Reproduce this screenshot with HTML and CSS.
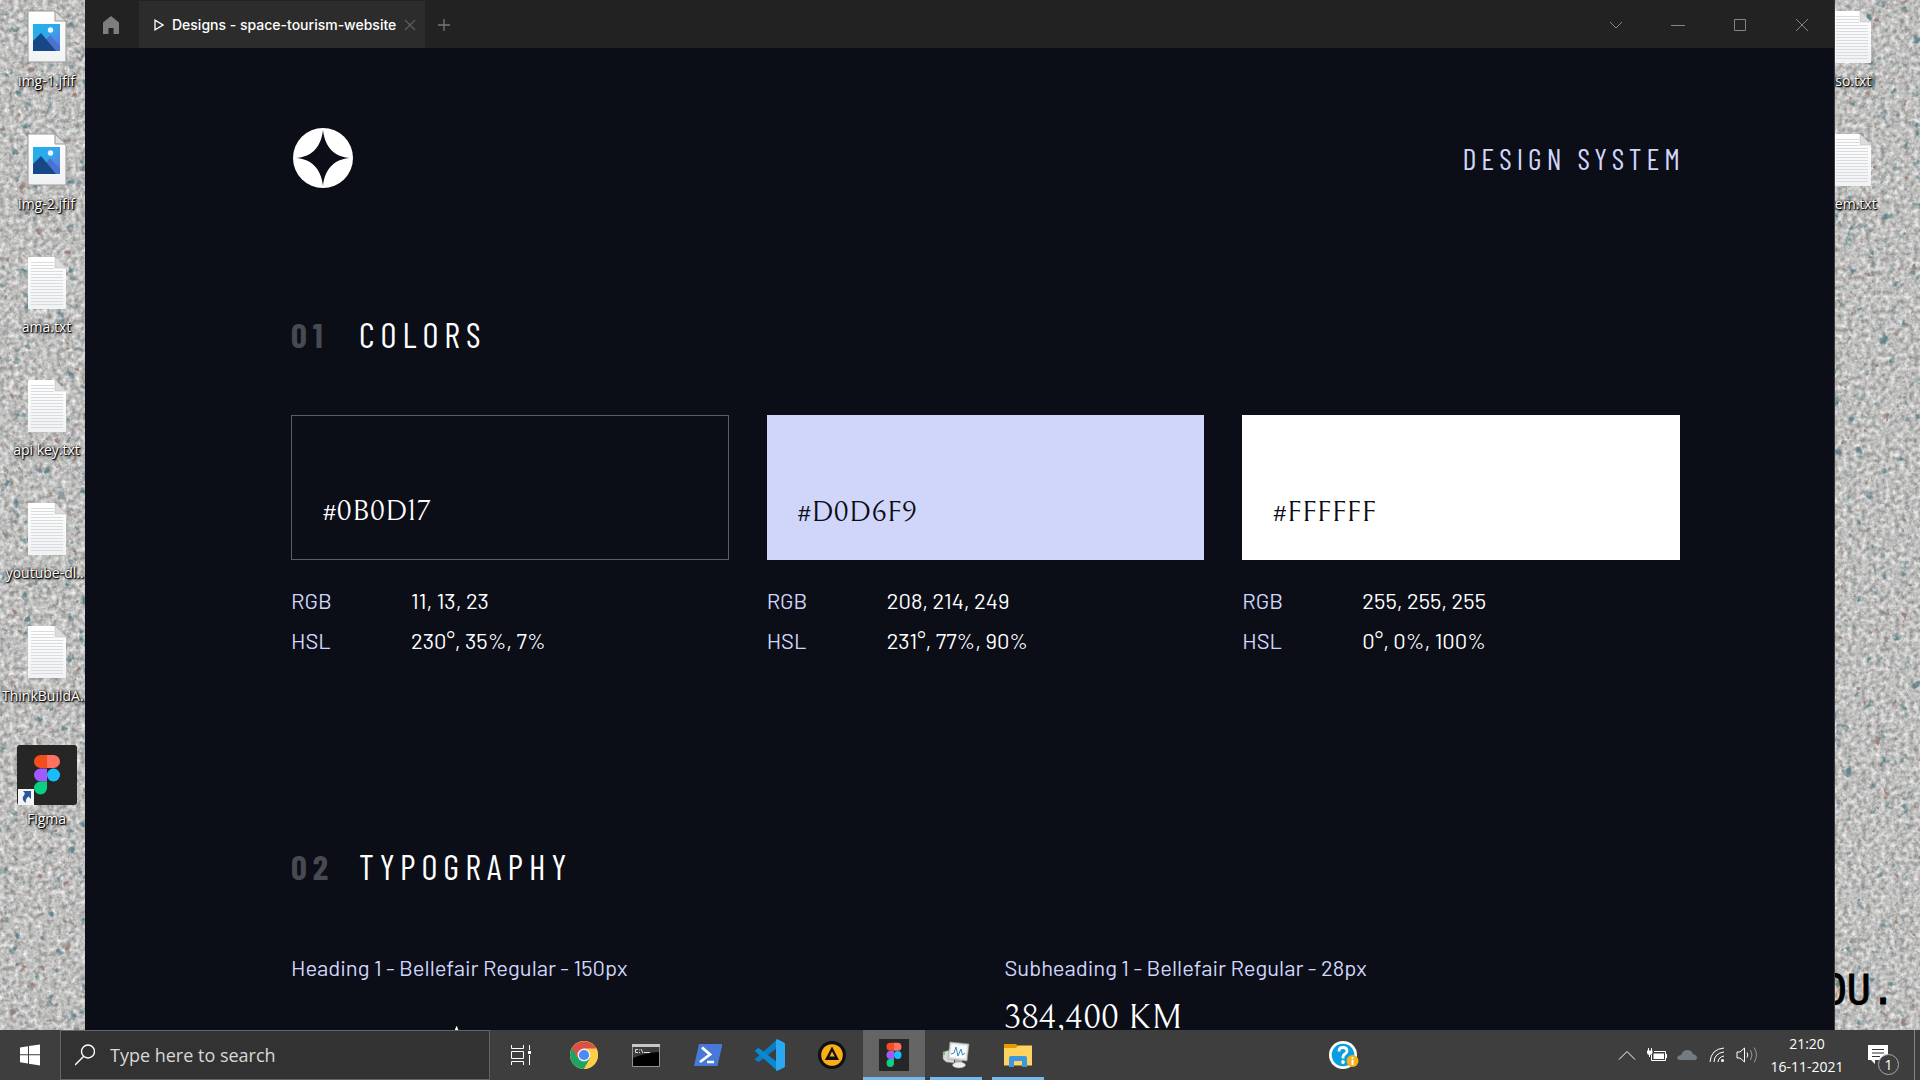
FILE: index.html
```html
<!DOCTYPE html>
<html lang="en">
<head>
<meta charset="utf-8">
<title>Designs - space-tourism-website</title>
<link rel="stylesheet" href="styles.css">
</head>
<body>
<svg class="defs" aria-hidden="true">
  <defs>
    <filter id="grain" x="0" y="0" width="100%" height="100%" color-interpolation-filters="sRGB">
      <feTurbulence type="fractalNoise" baseFrequency="0.21" numOctaves="5" seed="4"/>
      <feColorMatrix values="0.56 0 0 0 0.47  0.54 0.02 0 0 0.47  0.54 0 0.02 0 0.465  0 0 0 0 1"/>
    </filter>
    <filter id="teal" x="0" y="0" width="100%" height="100%" color-interpolation-filters="sRGB">
      <feTurbulence type="fractalNoise" baseFrequency="0.09" numOctaves="3" seed="9"/>
      <feColorMatrix values="0 0 0 0 0.38  0 0 0 0 0.52  0 0 0 0 0.55  6 0 0 0 -3.950"/>
    </filter>
    <filter id="rust" x="0" y="0" width="100%" height="100%" color-interpolation-filters="sRGB">
      <feTurbulence type="fractalNoise" baseFrequency="0.11" numOctaves="3" seed="31"/>
      <feColorMatrix values="0 0 0 0 0.6  0 0 0 0 0.5  0 0 0 0 0.47  7 0 0 0 -4.800"/>
    </filter>
    <linearGradient id="sky" x1="0" y1="0" x2="1" y2="1"><stop offset="0" stop-color="#1fb1ea"/><stop offset=".5" stop-color="#35a5ea"/><stop offset="1" stop-color="#6f6ad8"/></linearGradient>
    <linearGradient id="paper" x1="0" y1="0" x2="0" y2="1"><stop offset="0" stop-color="#fff"/><stop offset="1" stop-color="#f1f2f4"/></linearGradient>
    <pattern id="rules" width="32" height="3" patternUnits="userSpaceOnUse"><path d="M0 .5H32" stroke="#d9dcdf"/></pattern>
    <symbol id="image-file" viewBox="0 0 40 54">
      <path d="M1 1H28L39 12V52H1Z" fill="url(#paper)" stroke="#999"/>
      <path d="M28 1V11H39Z" fill="#ddd" stroke="#999"/>
      <path d="M6 14H33V41H6Z" fill="url(#sky)"/>
      <path d="M18 31L23 25L33 36V41H18Z" fill="#4a73d0"/>
      <path d="M6 31L14 23L29 41H6Z" fill="#174787"/>
      <circle cx="23.500" cy="20" r="2.700" fill="#e8f7ff"/>
    </symbol>
    <symbol id="text-file" viewBox="0 0 40 54">
      <path d="M1 1H28L39 12V53H1Z" fill="url(#paper)"/>
      <path d="M4 5H27V13H36V49H4Z" fill="url(#rules)"/>
      <path d="M28 1V12H39Z" fill="#dcdcdc" stroke="#bbb" stroke-width=".5"/>
    </symbol>
    <symbol id="figma-logo" viewBox="0 0 60 60">
      <rect width="60" height="60" rx="3" fill="#262626"/>
      <path d="M30 10H23.500a6.500 6.500 0 0 0 0 13H30Z" fill="#f24e1e"/>
      <path d="M30 10h6.500a6.500 6.500 0 0 1 0 13H30Z" fill="#ff7262"/>
      <path d="M30 23.500h-6.500a6.500 6.500 0 0 0 0 13H30Z" fill="#a259ff"/>
      <circle cx="36.500" cy="30" r="6.500" fill="#1abcfe"/>
      <path d="M30 36.500h-6.500a6.500 6.500 0 1 0 6.500 6.500Z" fill="#0acf83"/>
    </symbol>
  </defs>
</svg>

<div class="desktop">
  <svg class="wallpaper" aria-hidden="true">
    <rect width="100%" height="100%" filter="url(#grain)"/>
    <rect width="100%" height="100%" filter="url(#teal)"/>
    <rect width="100%" height="100%" filter="url(#rust)"/>
  </svg>

  <div class="icons icons-left">
    <button class="shortcut"><svg class="file"><use href="#image-file"/></svg><span>img-1.jfif</span></button>
    <button class="shortcut"><svg class="file"><use href="#image-file"/></svg><span>img-2.jfif</span></button>
    <button class="shortcut"><svg class="file"><use href="#text-file"/></svg><span>ama.txt</span></button>
    <button class="shortcut"><svg class="file"><use href="#text-file"/></svg><span>api key.txt</span></button>
    <button class="shortcut"><svg class="file"><use href="#text-file"/></svg><span>youtube-dl...</span></button>
    <button class="shortcut"><svg class="file"><use href="#text-file"/></svg><span>ThinkBuildA...</span></button>
    <button class="shortcut app"><svg class="tile" viewBox="0 0 60 60"><use href="#figma-logo"/><path d="M1 44H17V60H1Z" fill="#f4f4f4"/><path d="M6 46H14V54L11.500 51.500Q8 54 9 58Q3 55 8 48.500Z" fill="#2b579a"/></svg><span>Figma</span></button>
  </div>

  <div class="window">
    <header class="titlebar">
      <button class="home" aria-label="Home"><svg width="16" height="18" viewBox="0 0 16 18"><path d="M0 18V6.500L8 0L16 6.500V18H10.500V12H5.500V18Z" fill="#7d7d7d"/></svg></button>
      <div class="tab">
        <svg width="10" height="12" viewBox="0 0 10 12"><path d="M1 1.200V10.800L9 6Z" fill="none" stroke="#fff" stroke-width="1.300"/></svg>
        <span>Designs - space-tourism-website</span>
        <button aria-label="Close tab"><svg width="12" height="12" viewBox="0 0 12 12"><path d="M1 1L11 11M11 1L1 11" stroke="#5c5c5c" stroke-width="1.300"/></svg></button>
      </div>
      <button class="new-tab" aria-label="New tab"><svg width="12" height="12" viewBox="0 0 12 12"><path d="M6 0V12M0 6H12" stroke="#777" stroke-width="1.300"/></svg></button>
      <div class="controls">
        <button aria-label="More"><svg width="14" height="14" viewBox="0 0 14 14"><path d="M1 4L7 10L13 4"/></svg></button>
        <button aria-label="Minimize"><svg width="14" height="14" viewBox="0 0 14 14"><path d="M0 7.500H14"/></svg></button>
        <button aria-label="Maximize"><svg width="14" height="14" viewBox="0 0 14 14"><path d="M1.500 1.500H12.500V12.500H1.500Z"/></svg></button>
        <button aria-label="Close"><svg width="14" height="14" viewBox="0 0 14 14"><path d="M1 1L13 13M13 1L1 13"/></svg></button>
      </div>
    </header>

    <main class="canvas">
      <div class="brand">
        <svg width="60" height="60" viewBox="0 0 60 60"><circle cx="30" cy="30" r="30" fill="#fff"/><path d="M30 2C32 20 42 29 57 30C42 31 32 40 30 58C28 40 18 31 3 30C18 29 28 20 30 2Z" fill="#0b0d17"/></svg>
        <h1>DESIGN SYSTEM</h1>
      </div>

      <section class="colors">
        <h2><span>01</span>COLORS</h2>
        <div class="swatches">
          <article>
            <h3 class="swatch dark">#0B0D17</h3>
            <dl><dt>RGB</dt><dd>11, 13, 23</dd><dt>HSL</dt><dd>230°, 35%, 7%</dd></dl>
          </article>
          <article>
            <h3 class="swatch lilac">#D0D6F9</h3>
            <dl><dt>RGB</dt><dd>208, 214, 249</dd><dt>HSL</dt><dd>231°, 77%, 90%</dd></dl>
          </article>
          <article>
            <h3 class="swatch white">#FFFFFF</h3>
            <dl><dt>RGB</dt><dd>255, 255, 255</dd><dt>HSL</dt><dd>0°, 0%, 100%</dd></dl>
          </article>
        </div>
      </section>

      <section class="typography">
        <h2><span>02</span>TYPOGRAPHY</h2>
        <div class="samples">
          <div><p class="caption">Heading 1 - Bellefair Regular - 150px</p><p class="display">EARTH</p></div>
          <div><p class="caption">Subheading 1 - Bellefair Regular - 28px</p><p class="subheading">384,400 KM</p></div>
        </div>
      </section>
    </main>
  </div>

  <div class="icons icons-right">
    <button class="shortcut"><svg class="file"><use href="#text-file"/></svg><span>iso.txt</span></button>
    <button class="shortcut"><svg class="file"><use href="#text-file"/></svg><span>item.txt</span></button>
    <p class="slogan">YOU.</p>
  </div>
</div>

<footer class="taskbar">
  <button class="start" aria-label="Start"><svg width="20" height="22" viewBox="0 0 20 22"><path d="M0 3.500L8 2.300V10.300H0ZM9 2.100L20 .5V10.300H9ZM0 11.300H8V19.500L0 18.300ZM9 11.300H20V21.500L9 19.700Z" fill="#fff"/></svg></button>
  <label class="search">
    <svg width="20" height="22" viewBox="0 0 20 22"><circle cx="13" cy="7.500" r="6.500" fill="none" stroke="#fff" stroke-width="1.400"/><path d="M8.500 12.500L0 21" stroke="#fff" stroke-width="1.500"/></svg>
    <input type="text" placeholder="Type here to search" aria-label="Search">
  </label>
  <nav class="apps">
    <button aria-label="Task View"><svg width="22" height="20" viewBox="0 0 22 20" fill="none" stroke="#fff"><path d="M.5 0V3.500H12.500V0M.5 20V16.500H12.500V20M.5 6.500H12.500V13.500H.5ZM18.500 0V5M18.500 10V20"/><path d="M17 6H20V9H17Z" fill="#fff" stroke="none"/></svg></button>
    <button aria-label="Chrome"><svg width="28" height="28" viewBox="0 0 28 28"><circle cx="14" cy="14" r="14" fill="#fc4"/><path d="M14 14L1.900 7A14 14 0 0 0 14 28L20 17.500Z" fill="#1da462"/><path d="M14 14L20 17.500L14 28A14 14 0 0 0 26.100 7H14Z" fill="#ffcd46"/><path d="M1.900 7A14 14 0 0 1 26.100 7.500H14L8 17.500Z" fill="#dd5144"/><circle cx="14" cy="14" r="6.500" fill="#f1f1f1"/><circle cx="14" cy="14" r="5.100" fill="#4c8bf5"/></svg></button>
    <button aria-label="Command Prompt"><svg width="28" height="24" viewBox="0 0 28 24"><path d="M.5 1.500H27.500V23.500H.5Z" fill="#000" stroke="#8d949b"/><path d="M0 1H28V4H0Z" fill="#c3c8cc"/><path d="M1 4H27V9Q12 10 1 15Z" fill="#3c3c3c"/><path d="M6 6.500H3.500V9.500H6M7.500 6.500V7.500M7.500 9V10M9 6L11 10M12 9.500H18" stroke="#ddd" fill="none"/></svg></button>
    <button aria-label="PowerShell"><svg width="28" height="24" viewBox="0 0 28 24"><path d="M5 1H28.500L23.500 23H0Z" fill="#4879d8"/><path d="M8 4.500L16 11.500L6 19" fill="none" stroke="#fff" stroke-width="2.800"/><path d="M13 19H20" stroke="#fff" stroke-width="2.500"/></svg></button>
    <button aria-label="Visual Studio Code"><svg width="30" height="32" viewBox="0 0 30 32"><path d="M22 9L4.500 22.500Q3 23.500 1 21.500T1 19L22 .5Z" fill="#0b7dc4"/><path d="M22 23L4.500 9.500Q3 8.500 1 10.500T1 13L22 31.500Z" fill="#0a89d3"/><path d="M21 .5Q22 0 23 .5L29 3.500Q30 4 30 5V27Q30 28 29 28.500L23 31.500Q22 32 21 31.500Z" fill="#2ba8f2"/></svg></button>
    <button aria-label="AIMP"><svg width="28" height="30" viewBox="0 0 28 30"><circle cx="14" cy="15" r="14" fill="#111"/><circle cx="14" cy="15" r="10.800" fill="#fbae17"/><path d="M14 6.500L21 20H14L16.500 17H17L14 11.500L10 20H7Z" fill="#111"/><path d="M7 20L9 16.500H18L20.500 20Z" fill="#111"/></svg></button>
    <button class="open active" aria-label="Figma"><svg width="30" height="32" viewBox="4 4 52 52" preserveAspectRatio="none"><use href="#figma-logo" width="60" height="60"/></svg></button>
    <button class="open" aria-label="System monitor"><svg width="28" height="28" viewBox="0 0 28 28"><path d="M1 11L12 8V22L4 21L1 18Z" fill="#d7d7d7" stroke="#888" stroke-width=".5"/><path d="M2 11V14" stroke="#5c3" stroke-width="1.500"/><path d="M8 1L27 3L25 20L6 18Z" fill="#ddd" stroke="#999" stroke-width=".6"/><path d="M9.500 3L25 4.700L23.500 17.700L8 16Z" fill="#f8fbfc"/><path d="M9 13L12 12L14 6L16 15L19 8L20.500 14L23 12" fill="none" stroke="#3b8abb"/><path d="M13 19H20V23H13Z" fill="#aaa"/><ellipse cx="17" cy="24" rx="6.500" ry="3" fill="#eee" stroke="#999" stroke-width=".5"/></svg></button>
    <button class="open" aria-label="File Explorer"><svg width="28" height="24" viewBox="0 0 28 24"><path d="M0 1H12L14 3V7H0Z" fill="#e39b00"/><path d="M0 5H12L14 2.500H28V22.500H0Z" fill="#ffd35f"/><path d="M5 24V15Q5 13 7 13H21Q23 13 23 15V24H18V18H10V24Z" fill="#3c98dc"/></svg></button>
  </nav>
  <button class="help" aria-label="Help"><svg width="30" height="28" viewBox="0 0 30 28"><circle cx="14" cy="14" r="14" fill="#fff"/><circle cx="14" cy="14" r="11.300" fill="#0a9ddf"/><path d="M10 10.500Q10 6.500 14 6.500T18 10Q18 12 16 13T14 16.500V17.500" fill="none" stroke="#fff" stroke-width="2.800"/><circle cx="14" cy="21" r="1.900" fill="#fff"/><circle cx="23.500" cy="20" r="6" fill="#f6b11c"/><path d="M23.500 16V17.700M23.500 18.700V24" stroke="#fff" stroke-width="2"/></svg></button>
  <div class="tray">
    <button aria-label="Show hidden icons"><svg width="18" height="12" viewBox="0 0 18 12"><path d="M1 10.500L9 2.500L17 10.500"/></svg></button>
    <button aria-label="Battery"><svg width="20" height="14" viewBox="0 0 20 14"><path d="M4.500 7V12.500H18.500V3.500H7"/><path d="M6.500 5.500H17V11H6.500ZM19 6H20V10H19ZM0 2.500H5.500V5Q5 7 2.700 7T0 5Z" fill="#fff" stroke="none"/><path d="M1.500 0V3M4.500 0V3M2.500 6V9"/></svg></button>
    <button aria-label="OneDrive"><svg width="20" height="10" viewBox="0 0 20 10"><path d="M2 10Q0 9 0 7.500Q1 5 4 5Q6 0 10.500 0Q14.500 0 16 4Q20 5 20 8Q20 9.500 18 10Z" fill="#737a80" stroke="none"/></svg></button>
    <button aria-label="Network"><svg width="16" height="16" viewBox="0 0 16 16"><path d="M1 15Q2 2 15 1M5 15Q5.500 6 15 5M9 15Q9.500 10 15 9"/><circle cx="13.500" cy="13.500" r="1.500" fill="#fff" stroke="none"/></svg></button>
    <button aria-label="Volume"><svg width="22" height="18" viewBox="0 0 22 18"><path d="M1 6H4L8.500 2V16L4 12H1ZM11 6.500Q12.500 9 11 11.500"/><path d="M14.500 4Q17.500 9 14.500 14M18 1.500Q23 9 18 16.500" stroke="#999"/></svg></button>
  </div>
  <time class="clock"><span>21:20</span><span>16-11-2021</span></time>
  <button class="notifications" aria-label="Notifications"><svg width="32" height="32" viewBox="0 0 32 32"><path d="M1 1H21V16H8V20L4 16H1Z" fill="#fff"/><path d="M5 5.500H17M5 9H17M5 12.500H13" stroke="#333"/></svg><span>1</span></button>
</footer>
</body>
</html>
```
FILE: styles.css
```css
* { box-sizing: border-box; margin: 0; }
body {
  display: flex;
  flex-direction: column;
  height: 100vh;
  overflow: hidden;
  font-family: "Segoe UI", "Open Sans", "Noto Sans", sans-serif;
  color: #fff;
}
button {
  display: flex;
  align-items: center;
  justify-content: center;
  padding: 0;
  border: 0;
  background: none;
  color: inherit;
  font: inherit;
}
svg { display: block; flex: none; }
.defs { position: absolute; width: 0; height: 0; }

.desktop {
  position: relative;
  flex: 1;
  min-height: 0;
  display: grid;
  grid-template-columns: 85px minmax(0, 1fr) 85px;
  grid-template-rows: minmax(0, 1fr);
  background: #bfbfbc;
}
.wallpaper { position: absolute; inset: 0; width: 100%; height: 100%; }
.icons { position: relative; display: flex; flex-direction: column; overflow: hidden; }
.icons-right { align-items: center; }
.icons-right .shortcut { margin-right: 52px; }
.shortcut {
  flex: none;
  flex-direction: column;
  justify-content: flex-start;
  width: 93px;
  height: 123px;
  padding-top: 10px;
  gap: 6px;
  font-size: 14px;
  line-height: 22px;
  white-space: nowrap;
  text-shadow: 1px 1px 1px #000, 1px 1px 3px #000, 0 0 2px #000;
}
.shortcut.app { padding-top: 7px; gap: 3px; }
.file { width: 40px; height: 54px; }
.tile { width: 60px; height: 60px; }
.slogan {
  margin-top: auto;
  align-self: flex-end;
  padding: 0 25px 16px 0;
  color: #000;
  font: 40px/48px "DejaVu Sans Mono", monospace;
  -webkit-text-stroke: 1px #000;
}

.window {
  position: relative;
  display: flex;
  flex-direction: column;
  min-height: 0;
  background: #0b0d17;
  border-right: 1px solid #3a3a3a;
}
.titlebar {
  display: flex;
  flex: none;
  height: 48px;
  padding-top: 1px;
  background: #222;
  font: 500 14px/20px Inter, sans-serif;
}
.home { width: 54px; padding-right: 2px; }
.tab {
  display: flex;
  align-items: center;
  gap: 8px;
  padding: 0 9px 0 15px;
  background: #2c2c2c;
}
.new-tab { width: 38px; }
.controls { display: flex; margin: 0 1px 0 auto; }
.controls button { width: 62px; }
.controls svg { fill: none; stroke: #858585; }

.canvas {
  flex: 1;
  min-height: 0;
  overflow: hidden;
  padding: 80px 154px 0 206px;
  font-family: Barlow, Roboto, sans-serif;
}
.brand { display: flex; align-items: center; justify-content: space-between; padding-left: 2px; }
h1, h2 {
  font-family: "Barlow Condensed", "Roboto Condensed", "Liberation Sans Narrow", sans-serif;
  font-weight: 400;
}
h1 { margin-right: -5px; font-size: 30px; line-height: 36px; letter-spacing: 5px; color: #d0d6f9; }
h2 { display: flex; font-size: 35px; line-height: 42px; letter-spacing: 6px; }
h2 span { width: 68px; font-weight: 700; color: #484a52; }
.colors { margin-top: 125px; }
.typography { margin-top: 185px; }
.swatches { display: grid; grid-template-columns: repeat(3, minmax(0, 1fr)); gap: 38px; margin-top: 60px; }
.swatch {
  display: flex;
  align-items: flex-end;
  height: 145px;
  padding: 0 30px 28px;
  font: 400 30px/40px Bellefair, "Liberation Serif", serif;
  color: #0b0d17;
}
.dark { color: #fff; border: 1px solid #5a5c6b; }
.lilac { background: #d0d6f9; }
.white { background: #fff; }
dl {
  display: grid;
  grid-template-columns: 120px 1fr;
  margin-top: 20px;
  font-size: 22px;
  line-height: 40px;
}
dt, .caption { color: #d0d6f9; }
dd { margin: 0; }
.samples { display: grid; grid-template-columns: repeat(2, minmax(0, 1fr)); gap: 38px; margin-top: 66px; }
.caption { font-size: 22px; line-height: 28px; }
.display, .subheading { font-family: Bellefair, "Liberation Serif", serif; }
.display { margin-top: 31px; font-size: 188px; line-height: 188px; }
.subheading { margin-top: 16px; font-size: 35px; line-height: 42px; }

.taskbar { display: flex; flex: none; height: 50px; background: #3d3e3d; }
.start { width: 60px; }
.search {
  display: flex;
  align-items: center;
  gap: 15px;
  width: 430px;
  padding-left: 14px;
  background: #323232;
  border: 1px solid #656565;
}
.search input {
  flex: 1;
  min-width: 0;
  padding: 0;
  border: 0;
  outline: 0;
  background: none;
  color: #fff;
  font: 18px/24px "Segoe UI", "Open Sans", "Noto Sans", sans-serif;
}
.search input::placeholder { color: #d8d8d8; opacity: 1; }
.apps { display: flex; margin-left: 1px; }
.apps button { width: 62px; }
.open { box-shadow: inset 0 -3px #76b9ed; }
.apps .open:not(.active) { width: 52px; margin: 0 5px; }
.active { background: #636463; }
.help { width: 36px; margin-left: auto; }
.tray { display: flex; margin-left: 250px; }
.tray button { width: 30px; }
.tray svg { fill: none; stroke: #fff; }
.clock {
  display: flex;
  flex-direction: column;
  justify-content: center;
  width: 90px;
  text-align: center;
  font-size: 14px;
  line-height: 23px;
}
.notifications {
  position: relative;
  width: 63px;
  margin-right: 5px;
  padding-top: 10px;
  border-right: 1px solid #858585;
}
.notifications span {
  position: absolute;
  left: 26px;
  top: 24px;
  width: 21px;
  height: 21px;
  border: 1px solid #aaa;
  border-radius: 50%;
  background: #3d3e3d;
  font-size: 14px;
  line-height: 19px;
}
```
